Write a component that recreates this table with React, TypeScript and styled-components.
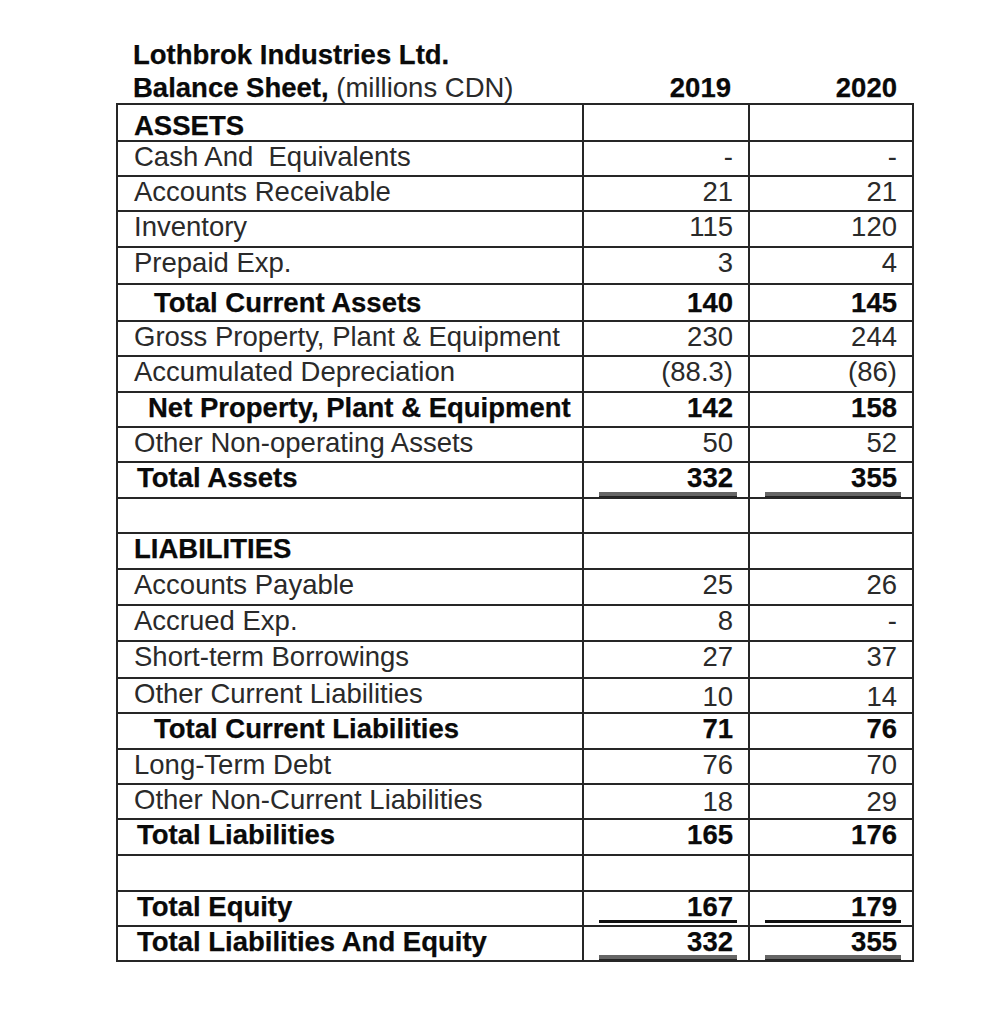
import React from "react";
import styled, { createGlobalStyle, css } from "styled-components";

const GlobalStyle = createGlobalStyle`
  html, body { margin: 0; padding: 0; background: #ffffff; }
  body { font-family: "Liberation Sans", Arial, sans-serif; }
`;

const Page = styled.div`
  padding: 37px 0 40px 116px;
`;

const Sheet = styled.div`
  width: 798px;
  font-family: "Liberation Sans", Arial, sans-serif;
  font-size: 27.5px;
  color: #262626;
`;

const HeaderRow = styled.div`
  display: grid;
  grid-template-columns: 466px 166px 166px;
  align-items: end;
`;

const TitleBlock = styled.div`
  padding-left: 17px;
`;

const TitleLine = styled.div<{ $second?: boolean }>`
  line-height: ${(p) => (p.$second ? "30px" : "36px")};
  white-space: nowrap;
  font-weight: 700;
  color: #0a0a0a;
  -webkit-text-stroke: 0.25px #0a0a0a;
`;

const Light = styled.span`
  font-weight: 400;
  color: #2a2a2a;
  -webkit-text-stroke: 0;
`;

const YearCell = styled.div`
  line-height: 30px;
  font-weight: 700;
  color: #0a0a0a;
  -webkit-text-stroke: 0.25px #0a0a0a;
  text-align: right;
  padding-right: 17px;
`;

const Table = styled.div`
  border-top: 2px solid #262626;
  border-left: 2px solid #262626;
  width: 796px;
`;

const Row = styled.div<{ $h: number }>`
  display: grid;
  grid-template-columns: 466px 166px 164px;
  height: ${(p) => p.$h}px;
`;

const cellBase = css`
  border-right: 2px solid #262626;
  border-bottom: 2px solid #262626;
  line-height: 27px;
  white-space: nowrap;
  overflow: hidden;
`;

const boldText = css`
  font-weight: 700;
  color: #0a0a0a;
  -webkit-text-stroke: 0.25px #0a0a0a;
`;

const LabelCell = styled.div<{ $bold?: boolean; $indent: number; $pad: number }>`
  ${cellBase};
  padding-left: ${(p) => 16 + p.$indent}px;
  padding-top: ${(p) => p.$pad}px;
  color: #2a2a2a;
  ${(p) => p.$bold && boldText};
`;

const NumCell = styled.div`
  ${cellBase};
  display: flex;
  flex-direction: column;
`;

const Value = styled.div<{ $bold?: boolean; $pad: number }>`
  text-align: right;
  padding-right: 15px;
  padding-top: ${(p) => p.$pad}px;
  color: #2a2a2a;
  ${(p) => p.$bold && boldText};
`;

const Rule = styled.div<{ $kind: "single" | "double" }>`
  margin: auto 11px 0 15px;
  ${(p) =>
    p.$kind === "single"
      ? css`
          height: 3px;
          background: #111;
          margin-bottom: 2px;
        `
      : css`
          height: 4px;
          background: #666;
          border-bottom: 1px solid #222;
        `}
`;

type Line = {
  label?: string;
  a?: string;
  b?: string;
  h: number;
  bold?: boolean;
  indent?: number;
  pad?: number;
  drop?: number;
  rule?: "single" | "double";
};

const lines: Line[] = [
  { label: "ASSETS", h: 37, bold: true, pad: 6 },
  { label: "Cash And\u00a0 Equivalents", a: "-", b: "-", h: 35 },
  { label: "Accounts Receivable", a: "21", b: "21", h: 35 },
  { label: "Inventory", a: "115", b: "120", h: 36 },
  { label: "Prepaid Exp.", a: "3", b: "4", h: 37 },
  { label: "Total Current Assets", a: "140", b: "145", h: 37, bold: true, indent: 20, pad: 3 },
  { label: "Gross Property, Plant & Equipment", a: "230", b: "244", h: 35 },
  { label: "Accumulated Depreciation", a: "(88.3)", b: "(86)", h: 36 },
  { label: "Net Property, Plant & Equipment", a: "142", b: "158", h: 35, bold: true, indent: 14 },
  { label: "Other Non-operating Assets", a: "50", b: "52", h: 35 },
  { label: "Total Assets", a: "332", b: "355", h: 36, bold: true, indent: 3, rule: "double" },
  { h: 35 },
  { label: "LIABILITIES", h: 36, bold: true },
  { label: "Accounts Payable", a: "25", b: "26", h: 36 },
  { label: "Accrued Exp.", a: "8", b: "-", h: 36 },
  { label: "Short-term Borrowings", a: "27", b: "37", h: 37 },
  { label: "Other Current Liabilities", a: "10", b: "14", h: 35, drop: 3 },
  { label: "Total Current Liabilities", a: "71", b: "76", h: 36, bold: true, indent: 20 },
  { label: "Long-Term Debt", a: "76", b: "70", h: 35 },
  { label: "Other Non-Current Liabilities", a: "18", b: "29", h: 35, drop: 2 },
  { label: "Total Liabilities", a: "165", b: "176", h: 36, bold: true, indent: 3 },
  { h: 36 },
  { label: "Total Equity", a: "167", b: "179", h: 35, bold: true, indent: 3, rule: "single" },
  { label: "Total Liabilities And Equity", a: "332", b: "355", h: 35, bold: true, indent: 3, rule: "double" },
];

const NumberCell: React.FC<{ v?: string; line: Line }> = ({ v, line }) => (
  <NumCell>
    <Value $bold={line.bold} $pad={1 + (line.pad ?? 0) + (line.drop ?? 0)}>
      {v ?? "\u00a0"}
    </Value>
    {line.rule && <Rule $kind={line.rule} />}
  </NumCell>
);

export default function App() {
  return (
    <>
      <GlobalStyle />
      <Page>
        <Sheet>
          <HeaderRow>
            <TitleBlock>
              <TitleLine>Lothbrok Industries Ltd.</TitleLine>
              <TitleLine $second>
                Balance Sheet, <Light>(millions CDN)</Light>
              </TitleLine>
            </TitleBlock>
            <YearCell>2019</YearCell>
            <YearCell>2020</YearCell>
          </HeaderRow>
          <Table>
            {lines.map((line, i) => (
              <Row key={i} $h={line.h}>
                <LabelCell $bold={line.bold} $indent={line.indent ?? 0} $pad={1 + (line.pad ?? 0)}>
                  {line.label ?? "\u00a0"}
                </LabelCell>
                <NumberCell v={line.a} line={line} />
                <NumberCell v={line.b} line={line} />
              </Row>
            ))}
          </Table>
        </Sheet>
      </Page>
    </>
  );
}
